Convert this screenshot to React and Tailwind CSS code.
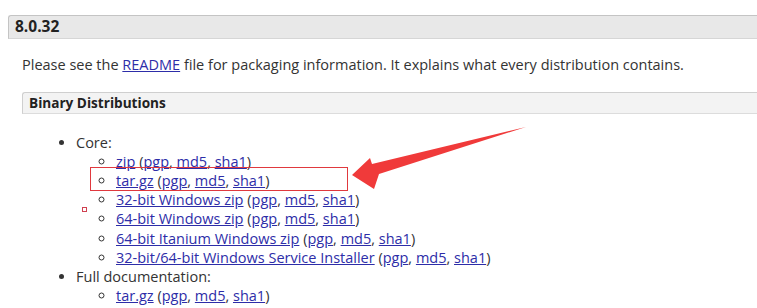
import React from "react";

const Link = ({ children }) => (
  <a href="#" className="text-[#2d2da8] underline">
    {children}
  </a>
);

const Sigs = () => (
  <>
    {" "}(<Link>pgp</Link>, <Link>md5</Link>, <Link>sha1</Link>)
  </>
);

const coreItems = [
  "zip",
  "tar.gz",
  "32-bit Windows zip",
  "64-bit Windows zip",
  "64-bit Itanium Windows zip",
  "32-bit/64-bit Windows Service Installer",
];

export default function App() {
  return (
    <div className="relative w-[757px] h-[308px] overflow-hidden bg-white font-['Open_Sans',sans-serif] text-[14.5px] leading-[19.1px] text-[#333]">
      <div className="pt-[15px] pl-[8px]">
        <h3 className="h-[24px] bg-[#e8e8e8] border-t border-l border-[#c4c4c4] border-b border-b-[#d6d6d6] rounded-tl-[3px] pl-[6px] text-[15.5px] leading-[20px] font-bold text-[#222]">
          8.0.32
        </h3>
        <div className="pl-[14px]">
          <p className="mt-[16px]">
            Please see the <Link>README</Link> file for packaging information.
            It explains what every distribution contains.
          </p>
          <h4 className="mt-[18px] h-[22px] bg-[#f3f3f3] border-t border-l border-[#cfcfcf] border-b border-b-[#dcdcdc] rounded-tl-[3px] pl-[6px] text-[13.6px] font-bold leading-[19px] text-[#222]">
            Binary Distributions
          </h4>
          <ul className="mt-[19px] pl-[54px] list-disc">
            <li>
              Core:
              <ul className="pl-[40px] list-[circle]">
                {coreItems.map((name) => (
                  <li key={name}>
                    <Link>{name}</Link>
                    <Sigs />
                  </li>
                ))}
              </ul>
            </li>
            <li>
              Full documentation:
              <ul className="pl-[40px] list-[circle]">
                <li>
                  <Link>tar.gz</Link>
                  <Sigs />
                </li>
              </ul>
            </li>
          </ul>
        </div>
      </div>

      {/* annotation overlay */}
      <svg className="absolute left-0 top-0" width="757" height="308">
        <rect x="90.5" y="167.5" width="257" height="23" fill="none" stroke="#e0393e" strokeWidth="1" />
        <rect x="82.5" y="207.5" width="4" height="4" fill="none" stroke="#d04050" strokeWidth="1" />
        <polygon
          points="352,175 370,158 372,164 526,127 379,174 374,189"
          fill="#f03a3a"
        />
      </svg>
    </div>
  );
}
